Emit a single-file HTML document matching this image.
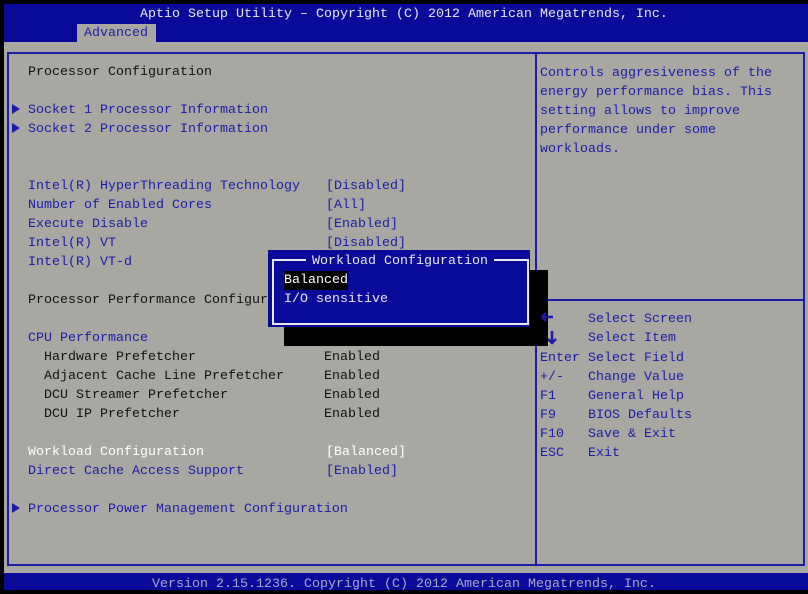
<html><head><style>
body{margin:0;width:808px;height:590px;background:#000;position:relative;overflow:hidden;font-family:"Liberation Mono",monospace;font-size:13.33px}
div{position:absolute;white-space:pre;line-height:18px}
.t{color:#1c1ca8}.k{color:#111}.w{color:#fff}
.a{position:absolute;width:0;height:0;border-top:5px solid transparent;border-bottom:5px solid transparent;border-left:8px solid #1c1ca8}
</style></head><body>
<div style="left:4px;top:4px;width:804px;height:38px;background:#0a0a9a"></div>
<div class="w" style="left:0;width:808px;top:6px;text-align:center;color:#e8e8e8">Aptio Setup Utility – Copyright (C) 2012 American Megatrends, Inc.</div>
<div style="left:77px;top:24px;width:79px;height:18px;background:#a8a7a2"></div>
<div style="left:84px;top:25px;color:#1c1ca8">Advanced</div>
<div style="left:4px;top:42px;width:804px;height:531px;background:#a8a7a2"></div>
<div style="left:7px;top:52px;width:794px;height:510px;border:2px solid #1c1ca8"></div>
<div style="left:535px;top:52px;width:2px;height:512px;background:#1c1ca8"></div>
<div style="left:537px;top:299px;width:266px;height:2px;background:#1c1ca8"></div>
<div style="left:4px;top:573px;width:804px;height:17px;background:#0a0a9a"></div>
<div style="left:0;width:808px;top:576px;text-align:center;color:#a8a8c8">Version 2.15.1236. Copyright (C) 2012 American Megatrends, Inc.</div>

<div class="k" style="left:28px;top:64px">Processor Configuration</div>
<span class="a" style="top:104px;left:12px"></span><div class="t" style="left:28px;top:102px">Socket 1 Processor Information</div>
<span class="a" style="top:123px;left:12px"></span><div class="t" style="left:28px;top:121px">Socket 2 Processor Information</div>
<div class="t" style="left:28px;top:178px">Intel(R) HyperThreading Technology</div><div class="t" style="left:326px;top:178px">[Disabled]</div>
<div class="t" style="left:28px;top:197px">Number of Enabled Cores</div><div class="t" style="left:326px;top:197px">[All]</div>
<div class="t" style="left:28px;top:216px">Execute Disable</div><div class="t" style="left:326px;top:216px">[Enabled]</div>
<div class="t" style="left:28px;top:235px">Intel(R) VT</div><div class="t" style="left:326px;top:235px">[Disabled]</div>
<div class="t" style="left:28px;top:254px">Intel(R) VT-d</div>
<div class="k" style="left:28px;top:292px">Processor Performance Configuration</div>
<div class="t" style="left:28px;top:330px">CPU Performance</div>
<div class="k" style="left:44px;top:349px">Hardware Prefetcher</div><div class="k" style="left:324px;top:349px">Enabled</div>
<div class="k" style="left:44px;top:368px">Adjacent Cache Line Prefetcher</div><div class="k" style="left:324px;top:368px">Enabled</div>
<div class="k" style="left:44px;top:387px">DCU Streamer Prefetcher</div><div class="k" style="left:324px;top:387px">Enabled</div>
<div class="k" style="left:44px;top:406px">DCU IP Prefetcher</div><div class="k" style="left:324px;top:406px">Enabled</div>
<div class="w" style="left:28px;top:444px">Workload Configuration</div><div class="w" style="left:326px;top:444px">[Balanced]</div>
<div class="t" style="left:28px;top:463px">Direct Cache Access Support</div><div class="t" style="left:326px;top:463px">[Enabled]</div>
<span class="a" style="top:503px;left:12px"></span><div class="t" style="left:28px;top:501px">Processor Power Management Configuration</div>

<div class="t" style="left:540px;top:64px;line-height:19px">Controls aggresiveness of the
energy performance bias. This
setting allows to improve
performance under some
workloads.</div>
<div class="t" style="left:588px;top:311px">Select Screen</div>
<div class="t" style="left:588px;top:330px">Select Item</div>
<div class="t" style="left:540px;top:349px;line-height:19px">Enter Select Field
+/-   Change Value
F1    General Help
F9    BIOS Defaults
F10   Save &amp; Exit
ESC   Exit</div>

<div style="left:284px;top:270px;width:264px;height:76px;background:#000"></div>
<div style="left:268px;top:250px;width:262px;height:77px;background:#0a0a9a"></div>
<div style="left:272px;top:259px;width:253px;height:62px;border:2px solid #e8e8e8"></div>
<div class="w" style="left:306px;top:253px;background:#0a0a9a;padding:0 6px;color:#e8e8e8">Workload Configuration</div>
<div class="w" style="left:284px;top:271px;background:#000;padding-top:1px">Balanced</div>
<div class="w" style="left:284px;top:291px;color:#e8e8e8">I/O sensitive</div>
<svg style="position:absolute;left:540px;top:308px" width="20" height="40"><path d="M2 9 L13 9 M2 9 L6 5 M2 9 L6 13" stroke="#1c1ca8" stroke-width="2.5" fill="none"/><path d="M12 23 L12 35 M8 31 L12 35 L16 31" stroke="#1c1ca8" stroke-width="2.5" fill="none"/></svg>
</body></html>
